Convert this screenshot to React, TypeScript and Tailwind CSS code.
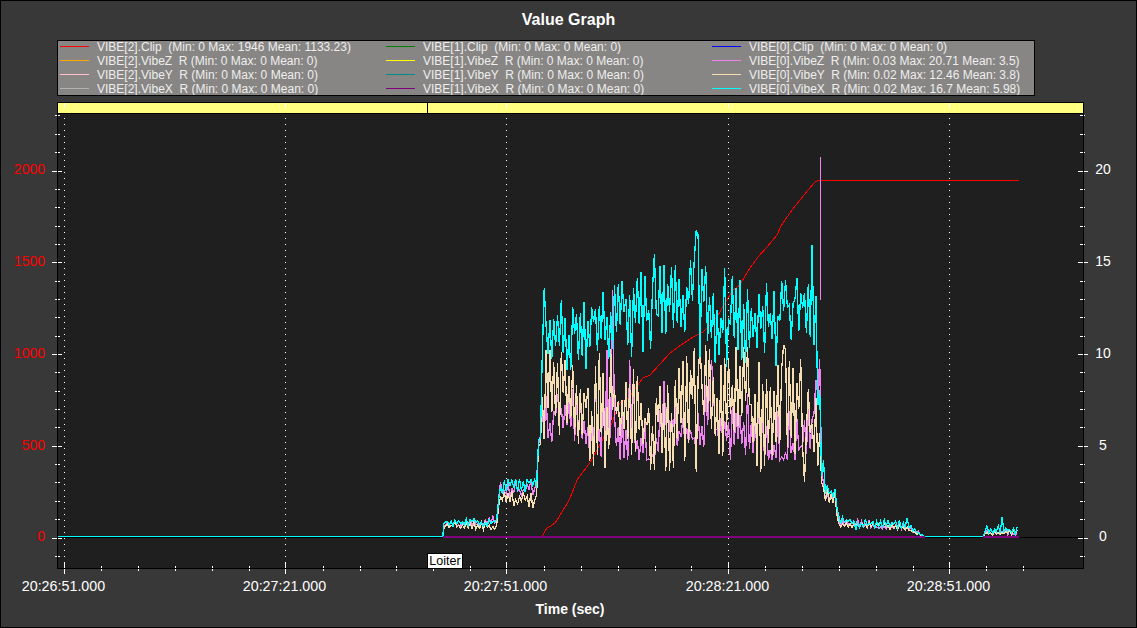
import React from "react";

type Row = [number, number, number];

function rng(seed: number) {
  let a = seed;
  return () => {
    a = (a + 0x6d2b79f5) | 0;
    let t = Math.imul(a ^ (a >>> 15), 1 | a);
    t = (t + Math.imul(t ^ (t >>> 7), 61 | t)) ^ t;
    return ((t ^ (t >>> 14)) >>> 0) / 4294967296;
  };
}

function env(rows: Row[], x: number): [number, number] {
  if (x <= rows[0][0]) return [rows[0][1], rows[0][2]];
  for (let i = 1; i < rows.length; i++) {
    if (x <= rows[i][0]) {
      const [x0, t0, b0] = rows[i - 1];
      const [x1, t1, b1] = rows[i];
      const f = (x - x0) / (x1 - x0);
      return [t0 + (t1 - t0) * f, b0 + (b1 - b0) * f];
    }
  }
  const l = rows[rows.length - 1];
  return [l[1], l[2]];
}

function trace(rows: Row[], seed: number, spikes: [number, number][], center: number, power: number) {
  const r = rng(seed);
  const pts: string[] = ["57,536.5", "443,536.5"];
  let i = 0;
  let wander = 0;
  for (let x = 443.5; x <= 1019; x += 1.9) {
    const [t, b] = env(rows, x);
    wander = wander * 0.8 + (r() - 0.5) * 0.24;
    const amp = Math.pow(r(), power) * (i % 2 === 0 ? center : 1 - center);
    const u = Math.min(1, Math.max(0, center + wander + (i % 2 === 0 ? -amp : amp)));
    let y = t + (b - t) * u;
    for (const [sx, sy] of spikes) if (Math.abs(x - sx) < 0.95) y = sy;
    pts.push(`${x.toFixed(1)},${y.toFixed(1)}`);
    i++;
  }
  return pts.join(" ");
}

const cyan: Row[] = [
  [443, 536.5, 536.5], [444, 511, 520], [447, 519, 527], [497, 518, 526], [499, 480, 497], [536, 478, 495],
  [538, 440, 470], [541, 400, 440], [543, 320, 400], [546, 292, 372], [600, 292, 368], [650, 268, 360],
  [700, 258, 358], [750, 286, 374], [800, 278, 360], [815, 258, 360], [818, 350, 440], [821, 420, 490],
  [825, 484, 500], [836, 490, 505], [838, 515, 525], [857, 522, 531], [905, 520, 530], [912, 526, 532],
  [920, 533, 535.5], [925, 536.5, 536.5], [983, 536.5, 536.5], [985, 526, 536], [1019, 526, 534],
];
const tan: Row[] = [
  [443, 536.5, 536.5], [444, 520, 530], [447, 522, 528], [497, 520, 530], [499, 492, 507], [536, 490, 508],
  [538, 450, 470], [541, 390, 440], [546, 350, 452], [600, 350, 468], [700, 345, 472], [800, 350, 472],
  [815, 368, 482], [820, 400, 470], [823, 480, 500], [836, 490, 505], [838, 520, 527], [905, 524, 530],
  [920, 534, 536], [925, 536.5, 536.5], [983, 536.5, 536.5], [985, 532, 536], [1019, 530, 535],
];
const pink: Row[] = [
  [443, 536.5, 536.5], [444, 516, 528], [447, 520, 527], [497, 516, 526], [499, 482, 497], [536, 478, 497],
  [538, 450, 470], [541, 410, 445], [546, 385, 452], [600, 375, 460], [700, 385, 460], [810, 390, 460],
  [817, 300, 400], [819, 290, 400], [822, 400, 480], [825, 485, 500], [836, 490, 505], [838, 516, 526],
  [905, 522, 530], [920, 532, 536], [925, 536.5, 536.5], [983, 536.5, 536.5], [985, 529, 535], [1019, 528, 535],
];

const legend: [string, string][] = [
  ["#ff0000", "VIBE[2].Clip  (Min: 0 Max: 1946 Mean: 1133.23)"],
  ["#008000", "VIBE[1].Clip  (Min: 0 Max: 0 Mean: 0)"],
  ["#0000ff", "VIBE[0].Clip  (Min: 0 Max: 0 Mean: 0)"],
  ["#ffa500", "VIBE[2].VibeZ  R (Min: 0 Max: 0 Mean: 0)"],
  ["#ffff00", "VIBE[1].VibeZ  R (Min: 0 Max: 0 Mean: 0)"],
  ["#ee82ee", "VIBE[0].VibeZ  R (Min: 0.03 Max: 20.71 Mean: 3.5)"],
  ["#ffc0cb", "VIBE[2].VibeY  R (Min: 0 Max: 0 Mean: 0)"],
  ["#008b8b", "VIBE[1].VibeY  R (Min: 0 Max: 0 Mean: 0)"],
  ["#f5deb3", "VIBE[0].VibeY  R (Min: 0.02 Max: 12.46 Mean: 3.8)"],
  ["#b0b0b0", "VIBE[2].VibeX  R (Min: 0 Max: 0 Mean: 0)"],
  ["#800080", "VIBE[1].VibeX  R (Min: 0 Max: 0 Mean: 0)"],
  ["#00ffff", "VIBE[0].VibeX  R (Min: 0.02 Max: 16.7 Mean: 5.98)"],
];

const redPts =
  "542,537 544,533 547,528 551,526 555,523 559,517 563,510 567,504 570,498 574,488 577,480 582,473 587,467 592,459 597,450 604,437 612,423 616,412 620,403 625,400 630,397 636,387 643,378 650,375 660,364 670,353 681,345 693,337 703,332 710,325 717,317 725,303 733,290 740,285 745,276 750,268 758,257 767,247 772,241 777,235 781,226 785,220 792,210 800,200 808,190 815,182 818,180.5 1019,180.5";

const majorX = [64.5, 285.5, 506.5, 728.5, 949.5];
const minorX: number[] = [];
for (let i = 0; i < 27; i++) {
  const x = 64.5 + i * 36.875;
  if (i % 6 !== 0 && x < 1083) minorX.push(Math.round(x) + 0.5);
}
const yTicks: number[] = [];
for (let k = -1; k <= 23; k++) yTicks.push(k);
const ty = (k: number) => Math.round(537.5 - 18.35 * k) + 0.5;
const labels = ["20:26:51.000", "20:27:21.000", "20:27:51.000", "20:28:21.000", "20:28:51.000"];

export default function App() {
  const c = trace(cyan, 11, [[545, 288], [561, 300], [603, 292], [655, 254], [697, 231], [699, 235], [724, 268], [812, 245], [866, 520], [884, 520], [908, 518], [1002, 517]], 0.45, 0.9);
  const t = trace(tan, 23, [[561, 352], [700, 345], [783, 345], [696, 472], [805, 482]], 0.5, 0.85);
  const p = trace(pink, 37, [[612, 290], [606, 350], [630, 360], [712, 360]], 0.72, 1.5);
  return (
    <div className="w-[1137px] h-[628px] bg-[#383838] border border-black flex flex-col overflow-hidden text-white [font-family:'Liberation_Sans',Arial,sans-serif]">
      <div className="h-[39px] pt-[10px] text-center text-[16px] leading-[18px] font-bold">Value Graph</div>
      <div className="ml-[56px] w-[978px] h-[56px] shrink-0 bg-[#888684] border border-black overflow-hidden">
        <div className="-mt-[1px] pl-[2px] grid grid-cols-[326px_326px_1fr] grid-rows-[repeat(4,14px)] text-[12px] text-[#eeeeee]">
          {legend.map(([col, text]) => (
            <div key={text} className="flex items-start gap-[8px] h-[14px] whitespace-pre leading-[14px]">
              <span className="block w-[29px] h-[1px] mt-[6px] shrink-0" style={{ backgroundColor: col }} />
              <span>{text}</span>
            </div>
          ))}
        </div>
      </div>
      <svg className="mt-[6px] block shrink-0" width={1135} height={525} viewBox="1 102 1135 525">
        <defs>
          <clipPath id="plot"><rect x={57} y={113} width={1027} height={456} /></clipPath>
        </defs>
        <rect x={57.5} y={113} width={1026} height={455.5} fill="#1f1f1f" />
        <rect x={57.5} y={102.5} width={1026} height={11} fill="#ffff80" stroke="#000" />
        <line x1={427.5} x2={427.5} y1={102} y2={113} stroke="#000" />
        {majorX.map((x) => (
          <g key={x} stroke="#fff">
            <line x1={x} x2={x} y1={103} y2={108} stroke="#fff" />
            <line x1={x} x2={x} y1={118} y2={562} strokeDasharray="1 5" />
            <line x1={x} x2={x} y1={562} y2={574} />
          </g>
        ))}
        {minorX.map((x) => (
          <line key={x} x1={x} x2={x} y1={566} y2={571} stroke="#fff" />
        ))}
        {yTicks.map((k) => {
          const y = ty(k);
          const major = k % 5 === 0;
          return (
            <g key={k} stroke="#fff">
              <line x1={major ? 52 : 55} x2={major ? 62 : 60} y1={y} y2={y} />
              <line x1={major ? 1078 : 1080} x2={major ? 1088 : 1085} y1={y} y2={y} />
            </g>
          );
        })}
        <line x1={57} x2={1084} y1={537.5} y2={537.5} stroke="#000" />
        <g clipPath="url(#plot)" fill="none" shapeRendering="crispEdges">
          <polyline points={redPts} stroke="#ff0000" strokeWidth={1} />
          <polyline points={p} stroke="#ee82ee" strokeWidth={1.3} />
          <line x1={820.5} x2={820.5} y1={157} y2={300} stroke="#ee82ee" />
          <polyline points={t} stroke="#f5deb3" strokeWidth={1.3} />
          <polyline points={c} stroke="#00ffff" strokeWidth={1.3} />
          <line x1={443} x2={925} y1={536.5} y2={536.5} stroke="#800080" />
          <line x1={443} x2={925} y1={537.5} y2={537.5} stroke="#800080" />
          <line x1={983} x2={1019} y1={536.5} y2={536.5} stroke="#800080" />
          <line x1={983} x2={1019} y1={537.5} y2={537.5} stroke="#800080" />
        </g>
        <line x1={57.5} x2={57.5} y1={113} y2={569} stroke="#000" />
        <line x1={1083.5} x2={1083.5} y1={113} y2={569} stroke="#000" />
        <line x1={57} x2={1084} y1={568.5} y2={568.5} stroke="#000" />
        <rect x={427.5} y={553.5} width={35} height={15} fill="#fff" stroke="#000" />
        <text x={445} y={565} textAnchor="middle" fontSize={12.5} fill="#000">Loiter</text>
        {[["2000", 174], ["1500", 266], ["1000", 358], ["500", 450], ["0", 541]].map(([s, y]) => (
          <text key={s} x={45} y={y} textAnchor="end" fontSize={14} fill="#ff0000">{s}</text>
        ))}
        {[["20", 174], ["15", 266], ["10", 358], ["5", 450], ["0", 541]].map(([s, y]) => (
          <text key={s} x={1103} y={y} textAnchor="middle" fontSize={14} fill="#fff">{s}</text>
        ))}
        {labels.map((s, i) => (
          <text key={s} x={majorX[i] - 1} y={591} textAnchor="middle" fontSize={14.3} fill="#fff">{s}</text>
        ))}
        <text x={570} y={614} textAnchor="middle" fontSize={14} fontWeight={700} fill="#fff">Time (sec)</text>
      </svg>
    </div>
  );
}
